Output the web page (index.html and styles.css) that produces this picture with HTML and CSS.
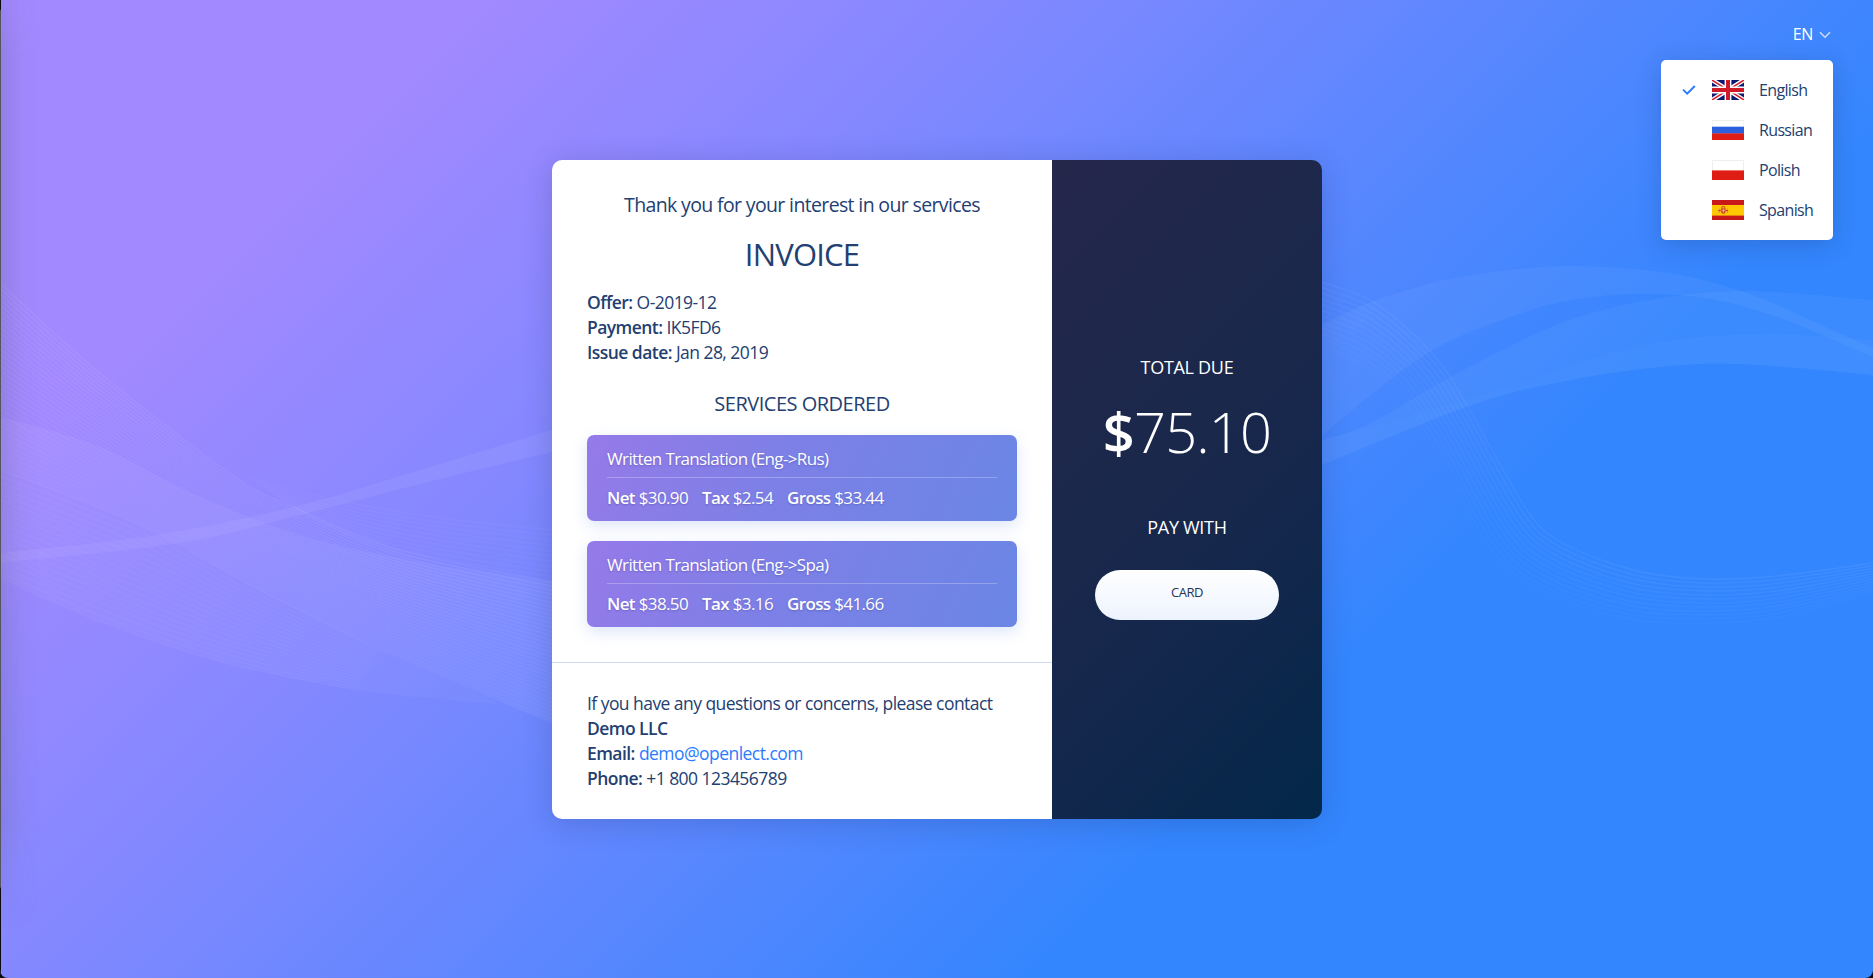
FILE: index.html
```html
<!DOCTYPE html>
<html lang="en">
<head>
<meta charset="utf-8">
<title>Invoice</title>
<link rel="stylesheet" href="styles.css">
</head>
<body>
<div class="page">
<svg class="waves" viewBox="0 0 1873 978" aria-hidden="true"><g id="waves" fill="none"></g></svg>
<div class="edge"></div>

<header class="topbar">
  <div class="lang">
    <button class="lang-toggle"><span>EN</span>
      <svg class="chevron" viewBox="0 0 12 8"><path d="M1 1.3 6 6.3 11 1.3"/></svg>
    </button>
    <ul class="lang-menu">
      <li class="lang-item">
        <svg class="check" viewBox="0 0 14 10"><path d="M1 4.6 5.2 8.6 12.8 1"/></svg>
        <svg class="flag" viewBox="0 0 32 20"><rect width="32" height="20" fill="#0b1a70"/><path d="M0 0 32 20M32 0 0 20" stroke="#fff" stroke-width="4.4"/><path d="M0 0 14 8.8M32 20 18 11.2M32 0 18 8.8M0 20 14 11.2" stroke="#d3202c" stroke-width="1.5"/><path d="M16 0V20M0 10H32" stroke="#fff" stroke-width="6.8"/><path d="M16 0V20M0 10H32" stroke="#cf1a28" stroke-width="4"/></svg>
        <span>English</span>
      </li>
      <li class="lang-item">
        <i class="check"></i>
        <svg class="flag" viewBox="0 0 32 20"><rect width="32" height="20" fill="#fff"/><path d="M0 7V.5H32V7" fill="none" stroke="#eee"/><rect y="6.7" width="32" height="7" fill="#2b5fdc"/><rect y="13.4" width="32" height="6.6" fill="#df1d14"/></svg>
        <span>Russian</span>
      </li>
      <li class="lang-item">
        <i class="check"></i>
        <svg class="flag" viewBox="0 0 32 20"><path d="M.5 11V.5H31.5V11" fill="#fff" stroke="#eee"/><rect y="10.4" width="32" height="9.6" fill="#df1d14"/></svg>
        <span>Polish</span>
      </li>
      <li class="lang-item">
        <i class="check"></i>
        <svg class="flag" viewBox="0 0 32 20"><rect width="32" height="20" fill="#c8181a"/><rect y="5" width="32" height="10.6" fill="#ffc800"/><path d="M9 8.2h4.6v3.2q0 2.4-2.3 2.4T9 11.4z" fill="#d0432a"/><path d="M7.2 8.6v4.4M15.4 8.6v4.4" stroke="#c99a8a" stroke-width="1.2"/><path d="M9.4 7.4q1.9-1.8 3.8 0M6.4 10.6h2.4M13.8 10.6h2.4" stroke="#c8301f" fill="none"/><path d="M11.3 8.6v4M9.6 10.6h3.4" stroke="#f1b9a8" stroke-width=".8"/></svg>
        <span>Spanish</span>
      </li>
    </ul>
  </div>
</header>

<main class="stage">
  <article class="card">
    <div class="details">
      <section class="invoice">
        <p class="thanks">Thank you for your interest in our services</p>
        <h1 class="title">INVOICE</h1>
        <div class="meta">
          <p><b>Offer:</b> O-2019-12</p>
          <p><b>Payment:</b> IK5FD6</p>
          <p><b>Issue date:</b> Jan 28, 2019</p>
        </div>
        <h2 class="subtitle">SERVICES ORDERED</h2>
        <div class="services">
          <div class="service">
            <p class="service-name">Written Translation (Eng-&gt;Rus)</p>
            <p class="service-sums"><span><b>Net</b> $30.90</span><span><b>Tax</b> $2.54</span><span><b>Gross</b> $33.44</span></p>
          </div>
          <div class="service">
            <p class="service-name">Written Translation (Eng-&gt;Spa)</p>
            <p class="service-sums"><span><b>Net</b> $38.50</span><span><b>Tax</b> $3.16</span><span><b>Gross</b> $41.66</span></p>
          </div>
        </div>
      </section>
      <footer class="contact">
        <p>If you have any questions or concerns, please contact</p>
        <p><b>Demo LLC</b></p>
        <p><b>Email:</b> <a href="#">demo@openlect.com</a></p>
        <p><b>Phone:</b> +1 800 123456789</p>
      </footer>
    </div>
    <aside class="payment">
      <p class="label">TOTAL DUE</p>
      <p class="price"><b>$</b>75.10</p>
      <p class="label">PAY WITH</p>
      <button class="pay">CARD</button>
    </aside>
  </article>
</main>
</div>
<script src="waves.js"></script>
</body>
</html>
```

FILE: styles.css
```css
* { box-sizing: border-box; margin: 0; padding: 0; }

body { background: #0b0b10; }
b { font-weight: 600; }
button { font: inherit; letter-spacing: inherit; border: 0; background: none; }

.page {
  position: relative;
  height: 978px;
  overflow: hidden;
  border-radius: 0 0 8px 8px;
  font-family: "Open Sans", sans-serif;
  font-size: 17.5px;
  line-height: 25px;
  letter-spacing: -0.55px;
  color: #234071;
  background: linear-gradient(135deg, #a389ff 16%, #8688ff 33.5%, #3486fe 70.5%);
}

.waves { position: absolute; inset: 0; width: 1873px; height: 978px; }
.edge {
  position: absolute;
  top: 0;
  left: 0;
  width: 40px;
  height: 978px;
  border: 0 solid #0b0b10;
  border-left-width: 1px;
  border-image: linear-gradient(#0b0b10 10px, #55555f 12px, #55555f 886px, #0b0b10 888px) 1;
}
.edge::after {
  content: "";
  display: block;
  height: 930px;
  background: linear-gradient(90deg, rgba(90, 90, 130, .2), rgba(90, 90, 130, .05) 50%, rgba(90, 90, 130, 0));
  -webkit-mask-image: linear-gradient(rgba(0, 0, 0, .5), #000 6%, #000 88%, transparent);
  mask-image: linear-gradient(rgba(0, 0, 0, .5), #000 6%, #000 88%, transparent);
}

.topbar { position: absolute; z-index: 2; top: 0; right: 40px; padding-top: 22px; }
.lang { position: relative; }
.lang-toggle { display: flex; align-items: center; gap: 6px; padding-right: 2px; font-size: 16px; letter-spacing: -0.3px; color: #fff; }
.chevron { width: 12px; height: 8px; fill: none; stroke: #c9deff; stroke-width: 1.5; }
.lang-menu {
  position: absolute;
  top: 38px;
  right: 0;
  width: 172px;
  height: 180px;
  padding: 10px 0 10px 21px;
  list-style: none;
  background: #fff;
  border-radius: 5px;
  box-shadow: 0 5px 25px rgba(20, 40, 90, .22);
}
.lang-item { display: flex; align-items: center; height: 40px; font-size: 16px; letter-spacing: -0.65px; }
.check { width: 14px; height: 10px; margin-right: 16px; fill: none; stroke: #2b7bff; stroke-width: 2; }
.flag { width: 32px; height: 20px; margin-right: 15px; }

.stage { display: grid; place-items: center; height: 978px; padding: 1px 0 0 1px; }
.card {
  position: relative;
  display: flex;
  width: 770px;
  height: 659px;
  border-radius: 10px;
  overflow: hidden;
  box-shadow: 0 4px 30px rgba(20, 30, 80, .2);
}

.details { display: flex; flex-direction: column; width: 500px; background: #fff; }
.invoice { height: 502px; padding: 31px 35px 0; }
.thanks { font-size: 19.5px; line-height: 28px; letter-spacing: -0.64px; text-align: center; }
.title { margin: 13px 0 14px; font-size: 31px; line-height: 44px; letter-spacing: -0.8px; font-weight: 400; text-align: center; }
.subtitle { margin: 25px 0 17px; font-size: 20px; line-height: 28px; letter-spacing: -0.5px; font-weight: 400; text-align: center; }
.services { display: grid; gap: 20px; }
.service {
  height: 86px;
  padding: 11px 20px;
  border-radius: 7px;
  font-size: 17px;
  letter-spacing: -0.63px;
  color: #fff;
  text-shadow: 0 1px 2px rgba(40, 40, 120, .3);
  background: linear-gradient(115deg, #957ae9, #7d80e6 45%, #6a86e5);
  box-shadow: 0 5px 15px rgba(60, 110, 220, .18);
}
.service-name { padding-bottom: 6px; border-bottom: 1px solid rgba(255, 255, 255, .25); }
.service-sums { display: flex; gap: 14px; padding-top: 7px; }

.contact { flex: 1; padding: 28px 35px 0; border-top: 1px solid #ced9f2; }
.contact a { color: #2b7bff; text-decoration: none; }

.payment {
  display: flex;
  flex-direction: column;
  align-items: center;
  width: 270px;
  padding-top: 195px;
  color: #fff;
  background: linear-gradient(135deg, #25274b, #1b284b 40%, #12274c 70%, #022849);
}
.label { font-size: 18px; letter-spacing: -0.3px; }
.price { margin: 13px 0 46px; font-size: 56px; line-height: 76px; font-weight: 300; letter-spacing: -0.8px; }
.pay {
  width: 184px;
  height: 50px;
  margin-top: 30px;
  padding-bottom: 5px;
  border-radius: 25px;
  font-size: 13px;
  letter-spacing: -0.5px;
  color: #253457;
  background: linear-gradient(#fff, #edf3fe);
}
```

FILE: waves.js
```js
// Soft background waves: filled ribbons and families of thin lines.
const NS = 'http://www.w3.org/2000/svg';
const root = document.getElementById('waves');

// Smooth curve through a list of points.
function curve(p, start) {
  let d = (start || 'M') + p[0].join(' ');
  for (let i = 0; i < p.length - 1; i++) {
    const a = p[i - 1] || p[i], b = p[i], c = p[i + 1], e = p[i + 2] || c;
    d += `C${b[0] + (c[0] - a[0]) / 6} ${b[1] + (c[1] - a[1]) / 6} ${c[0] - (e[0] - b[0]) / 6} ${c[1] - (e[1] - b[1]) / 6} ${c[0]} ${c[1]}`;
  }
  return d;
}
function add(d, attrs) {
  const el = document.createElementNS(NS, 'path');
  el.setAttribute('d', d);
  for (const k in attrs) el.setAttribute(k, attrs[k]);
  root.appendChild(el);
}
function ribbon(top, bottom, opacity, fill) {
  add(curve(top) + curve(bottom.slice().reverse(), 'L') + 'Z', { fill: fill || '#fff', 'fill-opacity': opacity });
}
function strands(a, b, n, opacity, fade) {
  for (let k = 0; k <= n; k++) {
    const t = k / n;
    const p = a.map((q, i) => [q[0] + (b[i][0] - q[0]) * t, q[1] + (b[i][1] - q[1]) * t]);
    add(curve(p), { stroke: '#fff', 'stroke-width': 1.3, 'stroke-opacity': opacity * (1 - fade * t) });
  }
}

const upper = [[0, 283], [96, 370], [229, 473], [293, 507], [400, 550], [552, 582]];
const lower = [[0, 470], [80, 500], [157, 533], [250, 585], [380, 650], [552, 723]];
const base = [[0, 578], [60, 605], [114, 627], [221, 662], [357, 690], [496, 704]];
const lowerCut = lower.slice(0, 5).concat([[496, 701]]);
strands(upper, lower, 34, 0.07, 0.5);
ribbon([[0, 417], [96, 445], [190, 492], [300, 535], [420, 562], [552, 582]], lower, 0.05);
ribbon(lowerCut, base, 0.035);
strands(lowerCut.slice(0, 5), base.slice(0, 5), 18, 0.035, 0);
strands([[250, 478], [350, 503], [450, 519], [552, 530]], [[293, 507], [370, 545], [450, 565], [552, 582]], 10, 0.035, 0);
ribbon([[0, 553], [157, 535], [293, 507], [420, 470], [552, 430]], [[0, 563], [179, 543], [300, 515], [420, 484], [552, 452]], 0.06);

strands(
  [[1322, 282], [1375, 303], [1432, 353], [1468, 407], [1525, 507], [1561, 542], [1633, 570], [1705, 579], [1777, 576], [1873, 563]],
  [[1322, 345], [1365, 365], [1400, 395], [1436, 450], [1492, 550], [1543, 591], [1625, 618], [1705, 623], [1777, 617], [1873, 593]],
  11, 0.06, 0.6);
ribbon(
  [[1322, 325], [1371, 302], [1440, 281], [1510, 270], [1576, 266], [1669, 273], [1744, 292], [1810, 320], [1873, 348]],
  [[1322, 435], [1428, 353], [1525, 312], [1580, 299], [1633, 294], [1705, 298], [1777, 317], [1873, 357]], 0.07, '#b8d8ff');
ribbon(
  [[1322, 440], [1371, 423], [1454, 375], [1561, 323], [1651, 300], [1744, 291], [1873, 300]],
  [[1322, 465], [1472, 405], [1561, 382], [1651, 368], [1737, 364], [1873, 375]], 0.07, '#a8d8ff');
ribbon(
  [[1322, 440], [1371, 427], [1490, 392], [1615, 352], [1690, 338], [1777, 334], [1873, 340]],
  [[1322, 465], [1472, 405], [1561, 382], [1651, 368], [1737, 364], [1873, 375]], 0.03, '#a8d8ff');
```
